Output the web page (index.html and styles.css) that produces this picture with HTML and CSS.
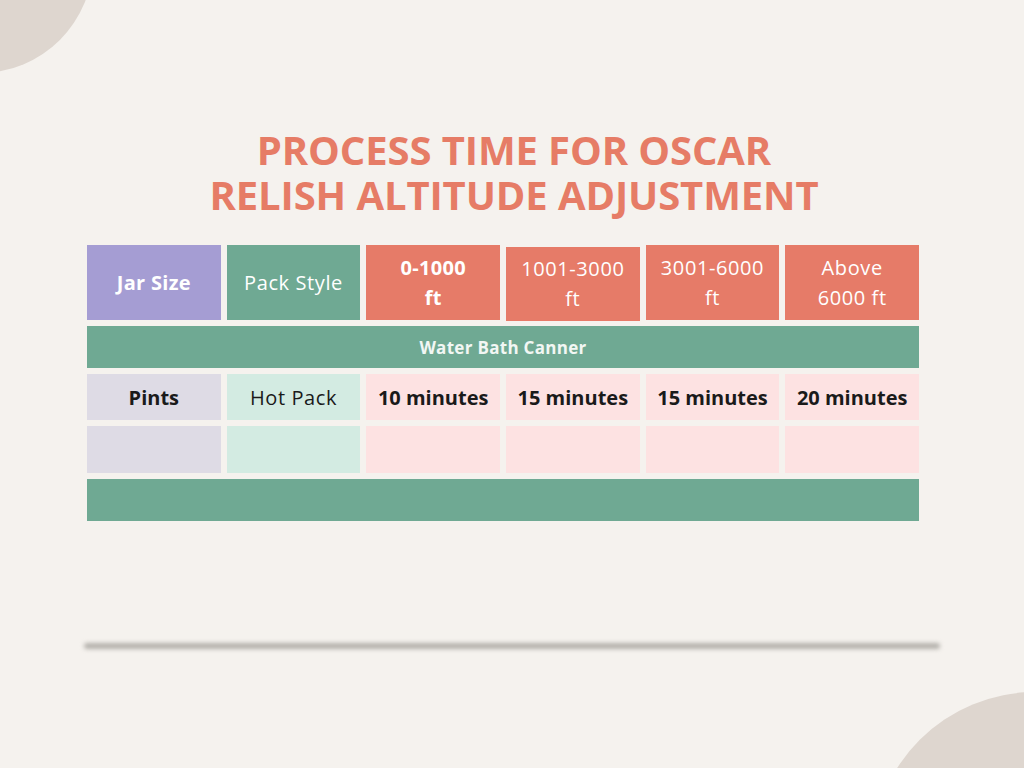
FILE: index.html
```html
<!DOCTYPE html>
<html>
<head>
<meta charset="utf-8">
<link rel="stylesheet" href="styles.css">
</head>
<body>
<div class="page">
  <div class="blob blob-tl"></div>
  <div class="blob blob-br"></div>
  <h1 class="title">PROCESS TIME FOR OSCAR<br>RELISH ALTITUDE ADJUSTMENT</h1>
  <div class="table">
    <div class="cell head purple bold">Jar Size</div>
    <div class="cell head green">Pack Style</div>
    <div class="cell head coral bold">0-1000<br>ft</div>
    <div class="cell head coral shifted">1001-3000<br>ft</div>
    <div class="cell head coral">3001-6000<br>ft</div>
    <div class="cell head coral">Above<br>6000 ft</div>

    <div class="cell band">Water Bath Canner</div>

    <div class="cell body lpurple">Pints</div>
    <div class="cell body lgreen normal">Hot Pack</div>
    <div class="cell body lpink">10 minutes</div>
    <div class="cell body lpink">15 minutes</div>
    <div class="cell body lpink">15 minutes</div>
    <div class="cell body lpink">20 minutes</div>

    <div class="cell body lpurple"></div>
    <div class="cell body lgreen"></div>
    <div class="cell body lpink"></div>
    <div class="cell body lpink"></div>
    <div class="cell body lpink"></div>
    <div class="cell body lpink"></div>

    <div class="cell band"></div>
  </div>
  <div class="shadow-line"></div>
</div>
</body>
</html>
```

FILE: styles.css
```css
html, body {
  margin: 0;
  padding: 0;
}
body {
  background: #f5f2ee;
  width: 1024px;
  height: 768px;
  overflow: hidden;
  font-family: "Open Sans", sans-serif;
}
.page {
  position: relative;
  width: 1024px;
  height: 768px;
  overflow: hidden;
  display: flex;
  flex-direction: column;
  align-items: center;
}
.blob {
  position: absolute;
  border-radius: 50%;
  background: #ded6cf;
}
.blob-tl {
  width: 226px;
  height: 226px;
  left: -133px;
  top: -153px;
}
.blob-br {
  width: 326px;
  height: 326px;
  left: 872px;
  top: 692px;
}
.title {
  position: relative;
  margin: 127px 0 0 4px;
  font-family: "Open Sans", sans-serif;
  font-weight: 700;
  font-size: 40px;
  line-height: 45px;
  color: #e67c66;
  text-align: center;
  letter-spacing: -0.1px;
}
.table {
  position: relative;
  align-self: flex-start;
  margin: 28px 0 0 87px;
  width: 832px;
  display: grid;
  grid-template-columns: repeat(6, 1fr);
  grid-template-rows: 75px 42px 46px 47px 42px;
  column-gap: 6px;
  row-gap: 6px;
}
.cell {
  display: flex;
  align-items: center;
  justify-content: center;
  text-align: center;
}
.head {
  color: #ffffff;
  font-size: 20px;
  line-height: 30px;
  letter-spacing: 0.6px;
}
.head.bold { letter-spacing: 0.3px; }
.bold { font-weight: 700; }
.purple { background: #a59dd3; }
.green { background: #6fa993; }
.coral { background: #e67b68; }
.shifted {
  margin-top: 2px;
  margin-bottom: -1px;
}
.band {
  grid-column: 1 / -1;
  background: #6fa993;
  color: #f2f7f4;
  font-weight: 700;
  font-size: 17px;
  letter-spacing: 0.3px;
}
.body {
  color: #1a1a1a;
  font-weight: 700;
  font-size: 20px;
}
.body.normal {
  font-weight: 400;
  letter-spacing: 0.6px;
}
.lpurple { background: #dedbe5; }
.lgreen { background: #d3ebe2; }
.lpink { background: #fde2e2; }
.shadow-line {
  margin-top: 122px;
  width: 856px;
  height: 6px;
  background: #b3b0ab;
  filter: blur(2px);
  border-radius: 3px;
}
```
